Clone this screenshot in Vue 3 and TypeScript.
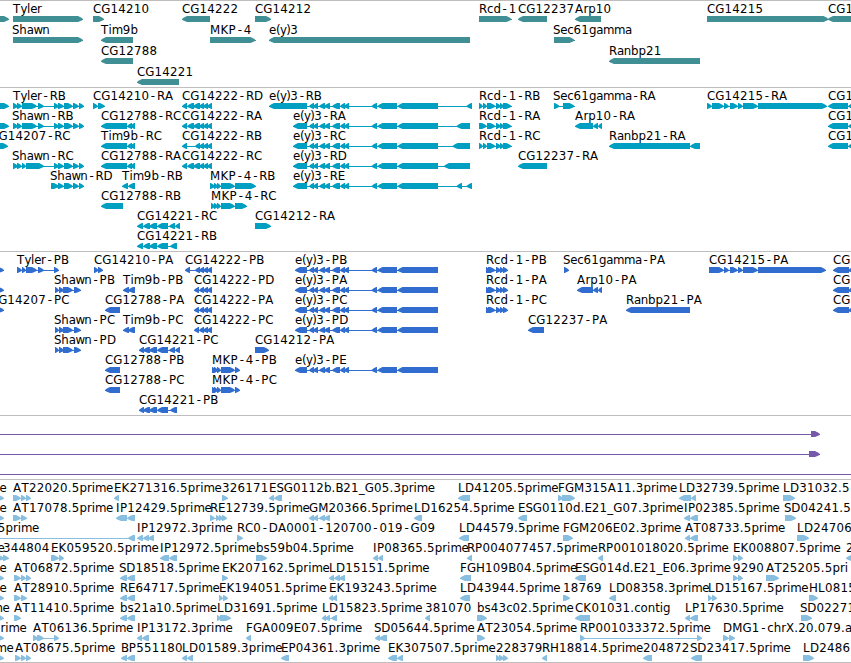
<template>
  <main class="browser">
    <section
      v-for="track in tracks"
      :key="track.name"
      class="track"
      :class="track.name"
    >
      <svg
        v-for="(row, i) in track.rows"
        :key="i"
        class="row"
        width="851"
        :height="track.rowHeight"
      >
        <g v-for="(feature, j) in row" :key="j">
          <rect
            class="intron"
            :x="feature.exons[0]"
            y="18"
            :width="feature.exons[feature.exons.length - 1] - feature.exons[0]"
            height="1"
          />
          <path class="exon" :d="exonPath(feature)" />
          <text
            v-if="feature.label"
            class="label"
            :x="glyphPositions(feature)"
            y="12"
          >{{ feature.label }}</text>
        </g>
      </svg>
    </section>
  </main>
</template>

<script setup lang="ts">
type Strand = '+' | '-'

interface Feature {
  label: string
  labelX: number
  alignEnd: boolean
  strand: Strand
  // start, end, start, end ...
  exons: number[]
}

interface Track {
  name: string
  rowHeight: number
  rows: Feature[][]
}

const HEAD = 5
const TOP = 15
const BOTTOM = 21
const MIDDLE = 18

// label advances in px, digits are all DIGIT wide
const DIGIT = 7.75
const ADVANCE: Record<string, number> = {
  A: 8.4, B: 7.8, C: 8.2, D: 9.2, E: 7.4, F: 6.9, G: 9.2, H: 9, I: 3.9, K: 8.2,
  L: 7, M: 10.4, P: 7.4, R: 8, S: 7.3, T: 7.5, X: 8.2,
  a: 6.7, b: 7.5, c: 6.4, d: 7.5, e: 6.9, g: 7.2, h: 7.4, i: 3.3, l: 3.3, m: 11,
  n: 7.4, o: 7.2, p: 7.5, r: 4.8, s: 6.2, t: 4.5, w: 8.9, y: 6.4,
  '.': 4, '-': 7.8, _: 6, '(': 4, ')': 4
}

const f = (label: string, labelX: number, strand: Strand, ...exons: number[]): Feature => ({
  label, labelX, alignEnd: false, strand, exons
})

// feature that starts left of the visible range, placed by the end of its label
const cut = (label: string, labelEnd: number, ...exons: number[]): Feature => ({
  label, labelX: labelEnd, alignEnd: true, strand: '+', exons
})

function glyphPositions({ label, labelX, alignEnd }: Feature) {
  const widths = [...label].map((c) => ADVANCE[c] ?? DIGIT)
  const total = widths.reduce((sum, w) => sum + w, 0)
  let x = alignEnd ? labelX - total : labelX
  return widths.map((w, i) => {
    // centre the narrower dash of the font in its slot
    const pos = label[i] === '-' ? x + 1.7 : x
    x += w
    return pos.toFixed(2)
  }).join(' ')
}

function exonPath({ exons, strand }: Feature) {
  let d = ''
  for (let i = 0; i + 1 < exons.length; i += 2) {
    const reverse = strand === '-'
    const tail = reverse ? exons[i + 1] : exons[i]
    const tip = reverse ? exons[i] : exons[i + 1]
    const dir = reverse ? 1 : -1
    const head = Math.min(HEAD, (exons[i + 1] - exons[i]) * 0.85) * dir
    d += `M${tail} ${TOP}H${tip + head}L${tip + head * 0.4} ${TOP + 1.5}L${tip} ${MIDDLE}V${MIDDLE + 0.8}` +
      `L${tip + head * 0.4} ${BOTTOM - 1.2}L${tip + head} ${BOTTOM}H${tail}Z`
  }
  return d
}

// exons shared by several transcripts
const shawnTail = [64, 73, 73, 79, 79, 84]
const cg14222 = [187, 194, 193, 200, 199, 204, 203, 208, 207, 212]
const cg14222Cds = [194, 199, 199, 204, 203, 208, 207, 212]
const ey3 = [309, 314, 313, 318, 319, 325, 324, 330, 332, 340, 340, 345, 344, 349, 371.5, 377, 377.5, 397, 397.5, 438]
const cg14221 = [143, 150, 149, 157, 157, 168]
const cg14215 = [724, 729, 730, 738, 738, 743, 743, 758]
const rcd1 = [496, 501, 500, 504]
const mkp4 = [214, 218, 217, 221, 221, 235]

const tracks: Track[] = [
  {
    name: 'genes',
    rowHeight: 21,
    rows: [
      [
        cut('', 0, -20, 9),
        f('Tyler', 13, '+', 13, 83),
        f('CG14210', 93, '+', 93, 104),
        f('CG14222', 182, '-', 182, 210),
        f('CG14212', 255, '+', 255, 271),
        f('Rcd-1', 479, '+', 479, 511.5),
        f('CG12237', 518, '-', 518, 547),
        f('Arp10', 575, '-', 575, 601),
        f('CG14215', 707, '+', 707, 828.5),
        f('CG1', 828, '-', 828, 880)
      ],
      [
        f('Shawn', 12, '+', 13, 83),
        f('Tim9b', 101, '-', 101, 133),
        f('MKP-4', 210, '+', 210, 255.5),
        f('e(y)3', 269, '-', 269, 470),
        f('Sec61gamma', 553, '+', 554, 574.5)
      ],
      [
        f('CG12788', 101, '-', 101, 133),
        f('Ranbp21', 609, '-', 609, 700)
      ],
      [f('CG14221', 137, '-', 137, 179)]
    ]
  },
  {
    name: 'transcripts',
    rowHeight: 20,
    rows: [
      [
        cut('', 0, -20, 9),
        f('Tyler-RB', 13, '+', 13, 18, 17, 22, 22, 37, 38, 44, 54, 59, 58, 64, ...shawnTail),
        f('CG14210-RA', 93, '+', 93, 98, 98, 105),
        f('CG14222-RD', 182, '-', 182, 187, ...cg14222),
        f('e(y)3-RB', 269, '-', 269, 307, ...ey3, 466.5, 472),
        f('Rcd-1-RB', 479, '+', 479, 483, 483, 487, 487, 495.5, ...rcd1, 503, 511.5),
        f('Sec61gamma-RA', 553, '+', 554, 559.5, 563, 574.5),
        f('CG14215-RA', 707, '+', 707, 712, 712, 724, ...cg14215, 758, 827),
        f('CG1', 828, '-', 828, 848, 848, 860)
      ],
      [
        cut('', 0, -20, 9),
        f('Shawn-RB', 12, '+', 13, 18, 17, 22, 22, 37, 38, 44, 54, 59, 58, 64, ...shawnTail),
        f('CG12788-RC', 101, '-', 101, 127, 127, 132, 130, 135),
        f('CG14222-RA', 182, '-', 182, 187, ...cg14222),
        f('e(y)3-RA', 293, '-', 293, 307, ...ey3, 456.5, 470),
        f('Rcd-1-RA', 479, '+', 479, 487, 487, 495.5, ...rcd1, 503, 511.5),
        f('Arp10-RA', 575, '-', 575, 593, 593, 598, 598, 602),
        f('CG1', 828, '-', 828, 848, 848, 860)
      ],
      [
        cut('G14207-RC', 70.5, -20, 8),
        f('Tim9b-RC', 101, '-', 101, 127, 127, 132, 130, 135),
        f('CG14222-RB', 182, '-', 182, 187, 195, 200, 199, 204, 203, 208, 207, 212),
        f('e(y)3-RC', 293, '-', 293, 307, ...ey3, 452.5, 470),
        f('Rcd-1-RC', 479, '+', 479, 483, 483, 487, 487, 495.5, ...rcd1, 503, 511.5),
        f('Ranbp21-RA', 609, '-', 609, 690, 690, 700),
        f('CG1', 828, '-', 828, 848, 848, 860)
      ],
      [
        f('Shawn-RC', 12, '+', 13, 18, 17, 22, 22, 26, 26, 44, 54, 59, 58, 64, ...shawnTail),
        f('CG12788-RA', 101, '-', 101, 127, 127, 132, 130, 135),
        f('CG14222-RC', 182, '-', 182, 187, ...cg14222),
        f('e(y)3-RD', 293, '-', 293, 307, ...ey3, 444, 470),
        f('CG12237-RA', 518, '-', 518, 547)
      ],
      [
        f('Shawn-RD', 50, '+', 51, 59, 58, 64, ...shawnTail),
        f('Tim9b-RB', 122, '-', 122, 128, 128, 135),
        f('MKP-4-RB', 210, '+', 210, 215, ...mkp4, 235, 256),
        f('e(y)3-RE', 293, '-', 293, 307, ...ey3, 456.5, 462, 466.5, 472)
      ],
      [
        f('CG12788-RB', 101, '-', 101, 123),
        f('MKP-4-RC', 211, '+', 211, 215, ...mkp4, 235, 247)
      ],
      [
        f('CG14221-RC', 137, '-', 137, 143, ...cg14221, 169, 175, 175, 180),
        f('CG14212-RA', 255, '+', 255, 271)
      ],
      [f('CG14221-RB', 137, '-', 137, 143, ...cg14221, 170, 177)]
    ]
  },
  {
    name: 'proteins',
    rowHeight: 20,
    rows: [
      [
        cut('', 0, -20, 4),
        f('Tyler-PB', 17, '+', 17, 22, 22, 26, 26, 37, 38, 44, 54, 59),
        f('CG14210-PA', 94, '+', 94, 98.5, 98, 103),
        f('CG14222-PB', 185, '-', 185, 190, 195, 200, 199, 204, 203, 208, 207, 212),
        f('e(y)3-PB', 295, '-', 295, 307, ...ey3),
        f('Rcd-1-PB', 486, '+', 486, 490, 488, 495.5, ...rcd1, 503, 508),
        f('Sec61gamma-PA', 563, '+', 564, 569),
        f('CG14215-PA', 709, '+', 709, 724, ...cg14215, 758, 826),
        f('CG', 833, '-', 833, 849, 848, 860)
      ],
      [
        cut('', 0, -20, 4),
        f('Shawn-PB', 54, '+', 55, 59, 59, 64, 63, 73, 74, 81),
        f('Tim9b-PB', 123, '-', 123, 129, 128, 135),
        f('CG14222-PD', 194, '-', ...cg14222Cds),
        f('e(y)3-PA', 295, '-', 295, 307, ...ey3),
        f('Rcd-1-PA', 486, '+', 486, 490, 488, 495.5, ...rcd1, 503, 508),
        f('Arp10-PA', 577, '-', 577, 593, 593, 598, 598, 602),
        f('CG', 833, '-', 833, 849, 848, 860)
      ],
      [
        cut('G14207-PC', 69.5, -20, 4),
        f('CG12788-PA', 105, '-', 105, 120),
        f('CG14222-PA', 194, '-', ...cg14222Cds),
        f('e(y)3-PC', 295, '-', 295, 307, ...ey3),
        f('Rcd-1-PC', 486, '+', 486, 490, 488, 495.5, ...rcd1, 503, 508),
        f('Ranbp21-PA', 626, '-', 626, 690),
        f('CG', 833, '-', 833, 849, 848, 860)
      ],
      [
        f('Shawn-PC', 54, '+', 55, 59, 59, 64, 63, 73, 74, 81),
        f('Tim9b-PC', 123, '-', 123, 129, 128, 135),
        f('CG14222-PC', 194, '-', ...cg14222Cds),
        f('e(y)3-PD', 295, '-', 295, 307, ...ey3),
        f('CG12237-PA', 528, '-', 528, 544)
      ],
      [
        f('Shawn-PD', 54, '+', 55, 59, 59, 64, 63, 73, 74, 81),
        f('CG14221-PC', 139, '-', 139, 144, ...cg14221, 169, 175, 175, 180),
        f('CG14212-PA', 255, '+', 255, 269)
      ],
      [
        f('CG12788-PB', 105, '-', 105, 120),
        f('MKP-4-PB', 212, '+', 212, 216, ...mkp4, 235, 240),
        f('e(y)3-PE', 295, '-', 295, 307, ...ey3)
      ],
      [
        f('CG12788-PC', 105, '-', 105, 120),
        f('MKP-4-PC', 212, '+', 212, 216, ...mkp4, 235, 240)
      ],
      [f('CG14221-PB', 139, '-', 139, 144, ...cg14221, 170, 177)]
    ]
  },
  {
    name: 'spans',
    rowHeight: 20,
    rows: [
      [cut('', 0, -30, -20, 811, 820)],
      [cut('', 0, -30, -20, 809, 820)],
      [cut('', 0, -30, -20, 860, 880)]
    ]
  },
  {
    name: 'ests',
    rowHeight: 20,
    rows: [
      [
        cut('e', 6.5, -10, 4),
        f('AT22020.5prime', 13, '+', 13, 21, 21, 26, 26, 31),
        f('EK271316.5prime', 114, '-', 114, 119),
        f('326171', 222, '+', 222, 228),
        f('ESG0112b.B21_G05.3prime', 269, '-', 269, 274, 274, 282),
        f('LD41205.5prime', 458, '-', 458, 470),
        f('FGM315A11.3prime', 558, '+', 558, 563, 562, 575),
        f('LD32739.5prime', 679, '-', 679, 691, 691, 696),
        f('LD31032.5', 783, '+', 783, 795)
      ],
      [
        cut('e', 6.5, -10, 4),
        f('AT17078.5prime', 13, '+', 13, 21, 21, 27),
        f('IP12429.5prime', 116, '-', 116, 127, 127, 135),
        f('RE12739.5prime', 210, '+', 210, 215, 216, 220, 219, 223, 222, 227),
        f('GM20366.5prime', 309, '-', 309, 314, 313, 318, 319, 325, 324, 330),
        f('LD16254.5prime', 414, '-', 414, 422),
        f('ESG0110d.E21_G07.3prime', 518, '-', 518, 527),
        f('IP02385.5prime', 684, '-', 684, 690, 690, 698),
        f('SD04241.5', 784, '+', 785, 796)
      ],
      [
        f('', 0, '-', -20, -10, 128, 135),
        cut('5prime', 39, -20, -15),
        f('IP12972.3prime', 137, '-', 137, 143, 143, 149, 148, 154),
        f('RC0-DA0001-120700-019-G09', 237, '+', 237, 243),
        f('LD44579.5prime', 459, '-', 459, 469),
        f('FGM206E02.3prime', 563, '+', 563, 573),
        f('AT08733.5prime', 685, '-', 685, 690, 690, 698),
        f('LD24706', 797, '+', 797, 809)
      ],
      [
        cut('e', 4.5, -10, -5),
        f('344804', 3, '+', -6, 4, 3, 9),
        f('EK059520.5prime', 51, '+', 51, 59, 59, 64),
        f('IP12972.5prime', 160, '-', 160, 169, 169, 177),
        f('bs59b04.5prime', 256, '+', 256, 267),
        f('IP08365.5prime', 373, '-', 373, 378, 378, 383),
        f('RP004077457.5prime', 467, '-', 467, 472),
        f('RP001018020.5prime', 598, '-', 598, 603),
        f('EK008807.5prime', 733, '+', 733, 738, 738, 743),
        f('2', 846, '-', 846, 860)
      ],
      [
        cut('e', 6.5, -10, 4),
        f('AT06872.5prime', 14, '+', 14, 21, 21, 26, 26, 31),
        f('SD18518.5prime', 119, '-', 120, 127, 127, 135),
        f('EK207162.5prime', 222, '+', 222, 228),
        f('LD15151.5prime', 329, '-', 329, 334, 334, 340, 339, 345),
        f('FGH109B04.5prime', 460, '-', 460, 471),
        f('ESG014d.E21_E06.3prime', 575, '-', 575, 586),
        f('9290', 733, '+', 733, 738, 738, 743),
        f('AT25205.5pri', 766, '+', 766, 779)
      ],
      [
        cut('e', 6.5, -10, 4),
        f('AT28910.5prime', 14, '+', 14, 21, 21, 27),
        f('RE64717.5prime', 120, '-', 120, 127, 127, 135),
        f('EK194051.5prime', 219, '+', 219, 223, 223, 228),
        f('EK193243.5prime', 329, '-', 329, 333, 332, 337),
        f('LD43944.5prime', 460, '-', 460, 470),
        f('18769', 563, '+', 563, 570),
        f('LD08358.3prime', 609, '-', 609, 616),
        f('LD15167.5prime', 708, '+', 708, 712, 712, 717),
        f('HL0815', 809, '+', 809, 818)
      ],
      [
        cut('me', 9.5, -10, 4),
        f('AT11410.5prime', 14, '+', 14, 21),
        f('bs21a10.5prime', 120, '-', 120, 127, 127, 135),
        f('LD31691.5prime', 217, '+', 217, 221, 220, 231),
        f('LD15823.5prime', 322, '-', 322, 326, 325, 330, 331, 337),
        f('381070', 425, '-', 425, 430),
        f('bs43c02.5prime', 477, '+', 477, 487),
        f('CK01031.contig', 575, '-', 575, 590),
        f('LP17630.5prime', 685, '-', 685, 690, 690, 698),
        f('SD02271', 800, '+', 801, 812)
      ],
      [
        cut('rime', 26.5, -10, 4),
        f('AT06136.5prime', 33, '+', 33, 38, 37, 44, 54, 59),
        f('IP13172.3prime', 137, '-', 137, 142, 142, 149),
        f('FGA009E07.5prime', 246, '-', 246, 251),
        f('SD05644.5prime', 374, '-', 375, 380, 379, 387),
        f('AT23054.5prime', 477, '+', 477, 485),
        f('RP001033372.5prime', 580, '+', 580, 585, 697, 702),
        f('DMG1-chrX.20.079.a', 723, '+', 723, 729, 729, 735)
      ],
      [
        cut('me', 13.5, -10, 4),
        f('AT08675.5prime', 15, '+', 15, 21, 21, 26, 26, 31),
        f('BP551180', 121, '-', 121, 127, 127, 135),
        f('LD01589.3prime', 182, '-', 182, 187, 187, 193),
        f('EP04361.3prime', 281, '-', 281, 289),
        f('EK307507.5prime', 388, '-', 388, 397, 397, 403),
        f('228379', 496, '+', 496, 500, 499, 504, 503, 508),
        f('RH18814.5prime', 542, '-', 542, 547),
        f('204872', 643, '-', 643, 652),
        f('SD23417.5prime', 690, '-', 691, 702),
        f('LD2486', 803, '+', 803, 814)
      ]
    ]
  }
]
</script>

<style>
body {
  background: #fff;
}
</style>

<style scoped>
.browser {
  display: flex;
  flex-direction: column;
  width: 851px;
  height: 663px;
  box-sizing: border-box;
  overflow: hidden;
  background: #fff;
  border-bottom: 1px solid #bebebe;
}

.track {
  display: flex;
  flex-direction: column;
  flex: none;
  border-top: 1px solid #bebebe;
  padding-bottom: 3px;
}

.row {
  display: block;
  flex: none;
  overflow: visible;
}

.label {
  font-family: 'DejaVu Sans', sans-serif;
  font-size: 11.8px;
  fill: #000;
}

.intron,
.exon {
  fill: currentColor;
}

.intron {
  shape-rendering: crispEdges;
}

.genes {
  color: #3f8f94;
  padding-bottom: 2px;
}

.transcripts {
  color: #009fc1;
}

.proteins {
  color: #316dce;
}

.spans {
  color: #7759ab;
}

.ests {
  color: #88bee0;
  padding-bottom: 2px;
}
</style>
